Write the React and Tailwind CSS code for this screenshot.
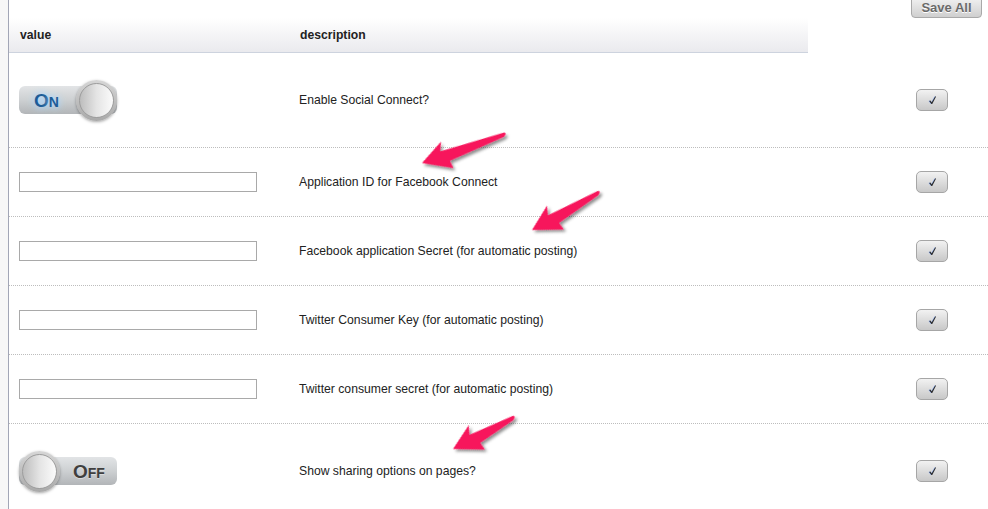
import React from 'react';

const rows = [
    { type: 'toggle', on: true, label: 'Enable Social Connect?', tall: true },
    { type: 'input', label: 'Application ID for Facebook Connect' },
    { type: 'input', label: 'Facebook application Secret (for automatic posting)' },
    { type: 'input', label: 'Twitter Consumer Key (for automatic posting)' },
    { type: 'input', label: 'Twitter consumer secret (for automatic posting)' },
    { type: 'toggle', on: false, label: 'Show sharing options on pages?', tall: true },
];

// tip (x,y) and tail (x,y) of each annotation arrow
const arrows = [
    { tip: [422, 163], tail: [506, 134] },
    { tip: [532, 230], tail: [600, 192] },
    { tip: [453, 449], tail: [515, 417] },
];

const Knob = ({ side }) => (
    <div
        className={`absolute top-0 ${side === 'right' ? 'right-0' : 'left-0'} w-[41px] h-[41px] rounded-full p-[3px] bg-gradient-to-b from-[#d6d6d6] to-[#a9a9a9] shadow-[0_1px_3px_rgba(0,0,0,0.35)]`}
    >
        <div className="w-full h-full rounded-full bg-gradient-to-r from-[#bdbdbd] via-[#e4e4e4] to-[#fbfbfb] border border-[#9d9d9d]" />
    </div>
);

const Toggle = ({ on }) => (
    <div className="relative w-[98px] h-[41px] flex items-center">
        <div className="w-full h-[28px] rounded-[6px] bg-gradient-to-b from-[#e2e4e6] via-[#cdd0d2] to-[#b2b5b8] flex items-center font-bold leading-none">
            {on ? (
                <span className="ml-[15px] text-[#1d5c97] [text-shadow:0_0_6px_#9fd0ff,0_0_10px_#bfe0ff]">
                    <span className="text-[19px]">O</span>
                    <span className="text-[14px]">N</span>
                </span>
            ) : (
                <span className="ml-[54px] text-[#3f3f3f] [text-shadow:0_1px_0_rgba(255,255,255,0.4)]">
                    <span className="text-[19px]">O</span>
                    <span className="text-[14px]">FF</span>
                </span>
            )}
        </div>
        <Knob side={on ? 'right' : 'left'} />
    </div>
);

const CheckButton = () => (
    <button className="w-[32px] h-[22px] mr-[40px] rounded-[5px] border border-[#a6a6a6] bg-gradient-to-b from-[#f2f2f2] to-[#c8c8c8] flex items-center justify-center">
        <svg width="9" height="10" viewBox="0 0 10 10">
            <path d="M1.2,6.2 L2.6,5.6 L4.1,7.6 L8,0.9 L8.9,1.3 L4.7,9.4 L3.7,9.4 Z" fill="#9fbfff" transform="translate(-0.7,0)" />
            <path d="M1.2,6.2 L2.6,5.6 L4.1,7.6 L8,0.9 L8.9,1.3 L4.7,9.4 L3.7,9.4 Z" fill="#2e2e2e" />
        </svg>
    </button>
);

const Arrow = ({ tip, tail }) => {
    const dx = tail[0] - tip[0];
    const dy = tail[1] - tip[1];
    const len = Math.sqrt(dx * dx + dy * dy);
    const angle = (Math.atan2(dy, dx) * 180) / Math.PI;
    const d = `M0,0 L25,-14 L21,-5 L${len - 1},-2 L${len},0 L${len - 3},2 L27,7 L28,15 Z`;
    return (
        <g transform={`translate(${tip[0]},${tip[1]}) rotate(${angle})`} filter="url(#arrowShadow)">
            <path d={d} fill="#f7155c" />
        </g>
    );
};

const App = () => {
    return (
        <div className="relative w-[988px] h-[509px] overflow-hidden bg-white flex font-['Liberation_Sans',Arial,sans-serif] text-[12.2px] text-[#222]">
            <div className="w-[9px] shrink-0 bg-[#f7f7f7] border-r border-[#a2a6b6]" />

            <div className="flex-1 flex flex-col">
                <div className="h-[18px] shrink-0 flex justify-end pr-[6px]">
                    <button className="-mt-[4px] h-[22px] w-[71px] rounded-[4px] border border-[#a9a9a9] bg-gradient-to-b from-[#f3f3f3] to-[#cfcfcf] text-[13px] font-bold text-[#6a6a6a] [text-shadow:0_1px_0_#fff] leading-none pt-[1px]">
                        Save All
                    </button>
                </div>

                <div className="h-[35px] shrink-0 w-[799px] flex items-center border-b border-[#cdd3de] bg-gradient-to-b from-white to-[#eaeaee] font-bold">
                    <div className="w-[290px] pl-[11px]">value</div>
                    <div className="pl-[1px]">description</div>
                </div>

                {rows.map((row, i) => (
                    <div
                        key={i}
                        className={`${row.tall ? 'h-[95px]' : 'h-[69px]'} shrink-0 flex items-center border-b border-dotted border-[#bdbdbd]`}
                    >
                        <div className="w-[290px] pl-[10px]">
                            {row.type === 'toggle' ? (
                                <Toggle on={row.on} />
                            ) : (
                                <input className="block w-[238px] h-[20px] border border-[#a9a9a9] bg-white" />
                            )}
                        </div>
                        <div className="flex-1">{row.label}</div>
                        <CheckButton />
                    </div>
                ))}
            </div>

            <svg className="absolute inset-0 pointer-events-none" width="988" height="509">
                <defs>
                    <filter id="arrowShadow" x="-20%" y="-50%" width="140%" height="200%">
                        <feDropShadow dx="1" dy="3" stdDeviation="1.5" floodColor="#000" floodOpacity="0.45" />
                    </filter>
                </defs>
                {arrows.map((a, i) => (
                    <Arrow key={i} tip={a.tip} tail={a.tail} />
                ))}
            </svg>
        </div>
    );
};

export default App;
